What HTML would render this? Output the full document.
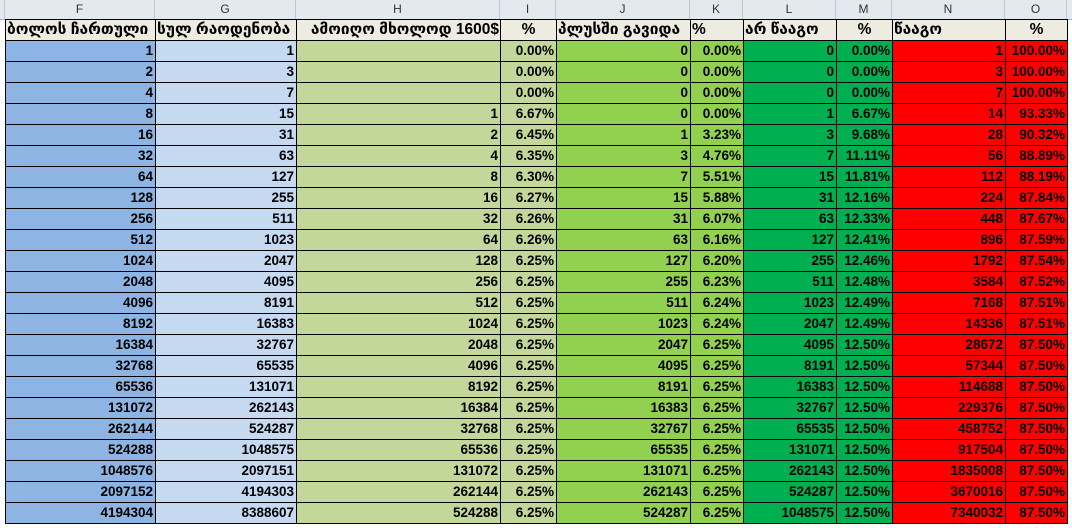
<!DOCTYPE html>
<html><head><meta charset="utf-8"><style>
body{margin:0;width:1072px;height:528px;overflow:hidden;background:#fff;font-family:"Liberation Sans","DejaVu Sans",sans-serif;}
.hdr{position:absolute;left:0;top:0;width:1072px;height:19px;background:#e4e9f0;border-bottom:1px solid #9eb6ce;}
.hdr div{position:absolute;top:0;height:19px;line-height:19px;text-align:center;font-size:12px;color:#333;border-right:1px solid #c0c8d4;box-sizing:border-box;}
table{position:absolute;left:5px;top:19px;border-collapse:collapse;table-layout:fixed;}
td{border:1px solid #000;height:20px;padding:0 2px;font-size:13.5px;font-weight:bold;text-align:right;white-space:nowrap;overflow:hidden;line-height:20px;}
tr.h td{background:#eeece1;text-align:left;font-size:15.5px;padding:0 1px;}
td:nth-child(1){background:#8db4e2}td:nth-child(2){background:#c5d9f1}
td:nth-child(3),td:nth-child(4){background:#c4d79b}
td:nth-child(5),td:nth-child(6){background:#92d050}
td:nth-child(7),td:nth-child(8){background:#00b050}
td:nth-child(9),td:nth-child(10){background:#ff0000}
</style></head><body>
<div class="hdr">
<div style="left:0;width:5px"></div>
<div style="left:5px;width:150px">F</div>
<div style="left:155px;width:141px">G</div>
<div style="left:296px;width:204px">H</div>
<div style="left:500px;width:56px">I</div>
<div style="left:556px;width:134px">J</div>
<div style="left:690px;width:53px">K</div>
<div style="left:743px;width:93px">L</div>
<div style="left:836px;width:56px">M</div>
<div style="left:892px;width:113px">N</div>
<div style="left:1005px;width:62px">O</div>
</div>
<table>
<colgroup><col style="width:150px"><col style="width:141px"><col style="width:204px"><col style="width:56px"><col style="width:134px"><col style="width:53px"><col style="width:93px"><col style="width:56px"><col style="width:113px"><col style="width:62px"></colgroup>
<tr class="h"><td>ბოლოს ჩართული</td><td>სულ რაოდენობა</td><td style="text-align:right">ამოიღო მხოლოდ 1600$</td><td style="text-align:center">%</td><td>პლუსში გავიდა</td><td>%</td><td>არ წააგო</td><td style="text-align:center">%</td><td>წააგო</td><td style="text-align:center">%</td></tr>
<tr><td>1</td><td>1</td><td></td><td>0.00%</td><td>0</td><td>0.00%</td><td>0</td><td>0.00%</td><td>1</td><td>100.00%</td></tr>
<tr><td>2</td><td>3</td><td></td><td>0.00%</td><td>0</td><td>0.00%</td><td>0</td><td>0.00%</td><td>3</td><td>100.00%</td></tr>
<tr><td>4</td><td>7</td><td></td><td>0.00%</td><td>0</td><td>0.00%</td><td>0</td><td>0.00%</td><td>7</td><td>100.00%</td></tr>
<tr><td>8</td><td>15</td><td>1</td><td>6.67%</td><td>0</td><td>0.00%</td><td>1</td><td>6.67%</td><td>14</td><td>93.33%</td></tr>
<tr><td>16</td><td>31</td><td>2</td><td>6.45%</td><td>1</td><td>3.23%</td><td>3</td><td>9.68%</td><td>28</td><td>90.32%</td></tr>
<tr><td>32</td><td>63</td><td>4</td><td>6.35%</td><td>3</td><td>4.76%</td><td>7</td><td>11.11%</td><td>56</td><td>88.89%</td></tr>
<tr><td>64</td><td>127</td><td>8</td><td>6.30%</td><td>7</td><td>5.51%</td><td>15</td><td>11.81%</td><td>112</td><td>88.19%</td></tr>
<tr><td>128</td><td>255</td><td>16</td><td>6.27%</td><td>15</td><td>5.88%</td><td>31</td><td>12.16%</td><td>224</td><td>87.84%</td></tr>
<tr><td>256</td><td>511</td><td>32</td><td>6.26%</td><td>31</td><td>6.07%</td><td>63</td><td>12.33%</td><td>448</td><td>87.67%</td></tr>
<tr><td>512</td><td>1023</td><td>64</td><td>6.26%</td><td>63</td><td>6.16%</td><td>127</td><td>12.41%</td><td>896</td><td>87.59%</td></tr>
<tr><td>1024</td><td>2047</td><td>128</td><td>6.25%</td><td>127</td><td>6.20%</td><td>255</td><td>12.46%</td><td>1792</td><td>87.54%</td></tr>
<tr><td>2048</td><td>4095</td><td>256</td><td>6.25%</td><td>255</td><td>6.23%</td><td>511</td><td>12.48%</td><td>3584</td><td>87.52%</td></tr>
<tr><td>4096</td><td>8191</td><td>512</td><td>6.25%</td><td>511</td><td>6.24%</td><td>1023</td><td>12.49%</td><td>7168</td><td>87.51%</td></tr>
<tr><td>8192</td><td>16383</td><td>1024</td><td>6.25%</td><td>1023</td><td>6.24%</td><td>2047</td><td>12.49%</td><td>14336</td><td>87.51%</td></tr>
<tr><td>16384</td><td>32767</td><td>2048</td><td>6.25%</td><td>2047</td><td>6.25%</td><td>4095</td><td>12.50%</td><td>28672</td><td>87.50%</td></tr>
<tr><td>32768</td><td>65535</td><td>4096</td><td>6.25%</td><td>4095</td><td>6.25%</td><td>8191</td><td>12.50%</td><td>57344</td><td>87.50%</td></tr>
<tr><td>65536</td><td>131071</td><td>8192</td><td>6.25%</td><td>8191</td><td>6.25%</td><td>16383</td><td>12.50%</td><td>114688</td><td>87.50%</td></tr>
<tr><td>131072</td><td>262143</td><td>16384</td><td>6.25%</td><td>16383</td><td>6.25%</td><td>32767</td><td>12.50%</td><td>229376</td><td>87.50%</td></tr>
<tr><td>262144</td><td>524287</td><td>32768</td><td>6.25%</td><td>32767</td><td>6.25%</td><td>65535</td><td>12.50%</td><td>458752</td><td>87.50%</td></tr>
<tr><td>524288</td><td>1048575</td><td>65536</td><td>6.25%</td><td>65535</td><td>6.25%</td><td>131071</td><td>12.50%</td><td>917504</td><td>87.50%</td></tr>
<tr><td>1048576</td><td>2097151</td><td>131072</td><td>6.25%</td><td>131071</td><td>6.25%</td><td>262143</td><td>12.50%</td><td>1835008</td><td>87.50%</td></tr>
<tr><td>2097152</td><td>4194303</td><td>262144</td><td>6.25%</td><td>262143</td><td>6.25%</td><td>524287</td><td>12.50%</td><td>3670016</td><td>87.50%</td></tr>
<tr><td>4194304</td><td>8388607</td><td>524288</td><td>6.25%</td><td>524287</td><td>6.25%</td><td>1048575</td><td>12.50%</td><td>7340032</td><td>87.50%</td></tr>
</table>
</body></html>
